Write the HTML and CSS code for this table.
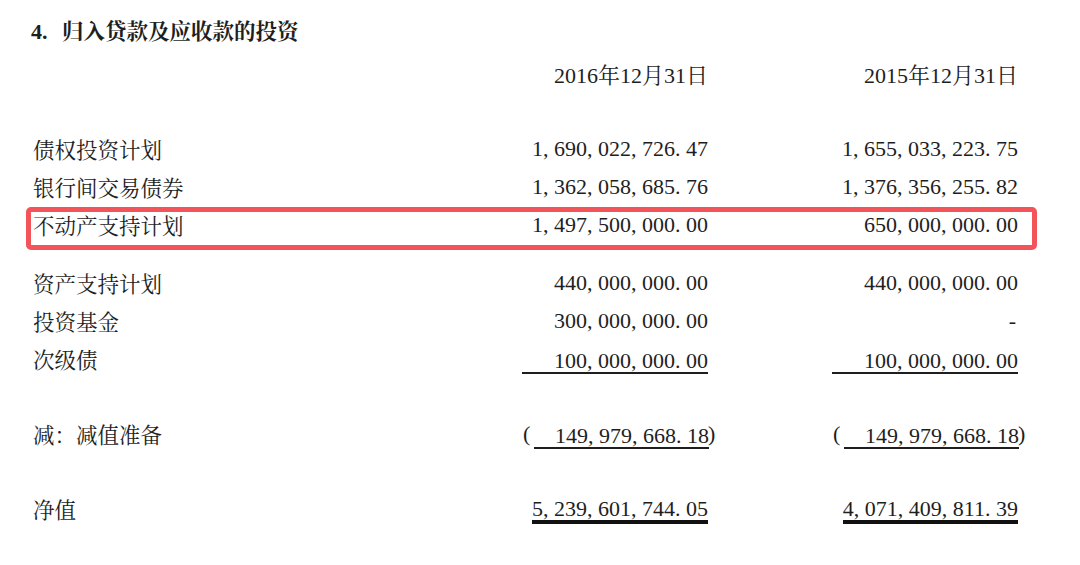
FILE: index.html
```html
<!DOCTYPE html>
<html lang="zh-CN">
<head>
<meta charset="utf-8">
<title>归入贷款及应收款的投资</title>
<link rel="stylesheet" href="styles.css">
</head>
<body>
<div class="sheet">
  <h1 class="title"><span class="num">4.</span><span class="cap">归入贷款及应收款的投资</span></h1>

  <div class="row head">
    <div class="label"></div>
    <div class="v"><span class="date">2016年12月31日</span></div>
    <div class="v"><span class="date">2015年12月31日</span></div>
  </div>

  <div class="group first">
    <div class="row">
      <div class="label">债权投资计划</div>
      <div class="v"><span class="n">1<i>,</i>690<i>,</i>022<i>,</i>726<i>.</i>47</span></div>
      <div class="v"><span class="n">1<i>,</i>655<i>,</i>033<i>,</i>223<i>.</i>75</span></div>
    </div>
    <div class="row">
      <div class="label">银行间交易债券</div>
      <div class="v"><span class="n">1<i>,</i>362<i>,</i>058<i>,</i>685<i>.</i>76</span></div>
      <div class="v"><span class="n">1<i>,</i>376<i>,</i>356<i>,</i>255<i>.</i>82</span></div>
    </div>
    <div class="row marked">
      <div class="label">不动产支持计划</div>
      <div class="v"><span class="n">1<i>,</i>497<i>,</i>500<i>,</i>000<i>.</i>00</span></div>
      <div class="v"><span class="n">650<i>,</i>000<i>,</i>000<i>.</i>00</span></div>
    </div>
  </div>

  <div class="group second">
    <div class="row">
      <div class="label">资产支持计划</div>
      <div class="v"><span class="n">440<i>,</i>000<i>,</i>000<i>.</i>00</span></div>
      <div class="v"><span class="n">440<i>,</i>000<i>,</i>000<i>.</i>00</span></div>
    </div>
    <div class="row">
      <div class="label">投资基金</div>
      <div class="v"><span class="n">300<i>,</i>000<i>,</i>000<i>.</i>00</span></div>
      <div class="v"><span class="n"><b class="dash">-</b></span></div>
    </div>
    <div class="row">
      <div class="label">次级债</div>
      <div class="v"><span class="n sub">100<i>,</i>000<i>,</i>000<i>.</i>00</span></div>
      <div class="v"><span class="n sub">100<i>,</i>000<i>,</i>000<i>.</i>00</span></div>
    </div>
  </div>

  <div class="row less">
    <div class="label">减：减值准备</div>
    <div class="v neg"><span class="paren">(</span><span class="n sub2">149<i>,</i>979<i>,</i>668<i>.</i>18</span><span class="paren close">)</span></div>
    <div class="v neg"><span class="paren">(</span><span class="n sub2">149<i>,</i>979<i>,</i>668<i>.</i>18</span><span class="paren close">)</span></div>
  </div>

  <div class="row net">
    <div class="label">净值</div>
    <div class="v"><span class="n total">5<i>,</i>239<i>,</i>601<i>,</i>744<i>.</i>05</span></div>
    <div class="v"><span class="n total">4<i>,</i>071<i>,</i>409<i>,</i>811<i>.</i>39</span></div>
  </div>
</div>
</body>
</html>
```

FILE: styles.css
```css
html, body {
  margin: 0;
  padding: 0;
  background: #ffffff;
}

body {
  font-family: "Liberation Serif", "Noto Serif CJK SC", "Noto Sans CJK SC", serif;
  color: #1e1e1e;
}

.sheet {
  padding: 17px 0 0 33px;
}

.title {
  margin: 0 0 0 -2px;
  font-size: 22px;
  line-height: 30px;
  font-weight: bold;
}

.title .num {
  display: inline-block;
  width: 31px;
}

.title .cap {
  font-size: 21.5px;
  letter-spacing: 0;
}

.row {
  display: grid;
  grid-template-columns: 489px 186px 310px;
  width: 985px;
  height: 38px;
  align-items: center;
}

.head {
  margin-top: 10px;
}

.label {
  font-size: 21.5px;
  line-height: 38px;
  white-space: nowrap;
}

.v {
  display: flex;
  justify-content: flex-end;
  align-items: center;
  font-size: 22px;
}

.date {
  font-size: 22px;
  line-height: 38px;
  white-space: nowrap;
}

.n {
  display: inline-block;
  font-size: 22px;
  line-height: 24px;
  white-space: nowrap;
  text-align: right;
  position: relative;
  top: -2px;
}

.n i {
  font-style: normal;
  display: inline-block;
  width: 11px;
  text-align: left;
}

.n .dash {
  font-weight: normal;
  display: inline-block;
  width: 11px;
  text-align: center;
}

.group.first {
  margin-top: 37px;
}

.group.second {
  margin-top: 20px;
}

.marked {
  position: relative;
}

.marked::after {
  content: "";
  position: absolute;
  left: -7px;
  right: -19px;
  top: -1px;
  bottom: -4px;
  border: 5px solid #f2545a;
  border-radius: 5px;
  pointer-events: none;
}

.sub {
  width: 186px;
  border-bottom: 2px solid #1e1e1e;
  line-height: 22px;
  top: 1px;
}

.less {
  margin-top: 37px;
}

.neg {
  margin-right: -6px;
}

.paren {
  display: inline-block;
  width: 11px;
  font-size: 22px;
  line-height: 24px;
  position: relative;
  top: -2px;
}

.paren.close {
  width: 6px;
  margin-left: -1px;
}

.sub2 {
  width: 175px;
  border-bottom: 2px solid #1e1e1e;
  line-height: 22px;
  top: 1px;
}

.net {
  margin-top: 37px;
}

.total {
  border-bottom: 4px solid #111111;
  line-height: 22px;
  top: 0;
}
```
